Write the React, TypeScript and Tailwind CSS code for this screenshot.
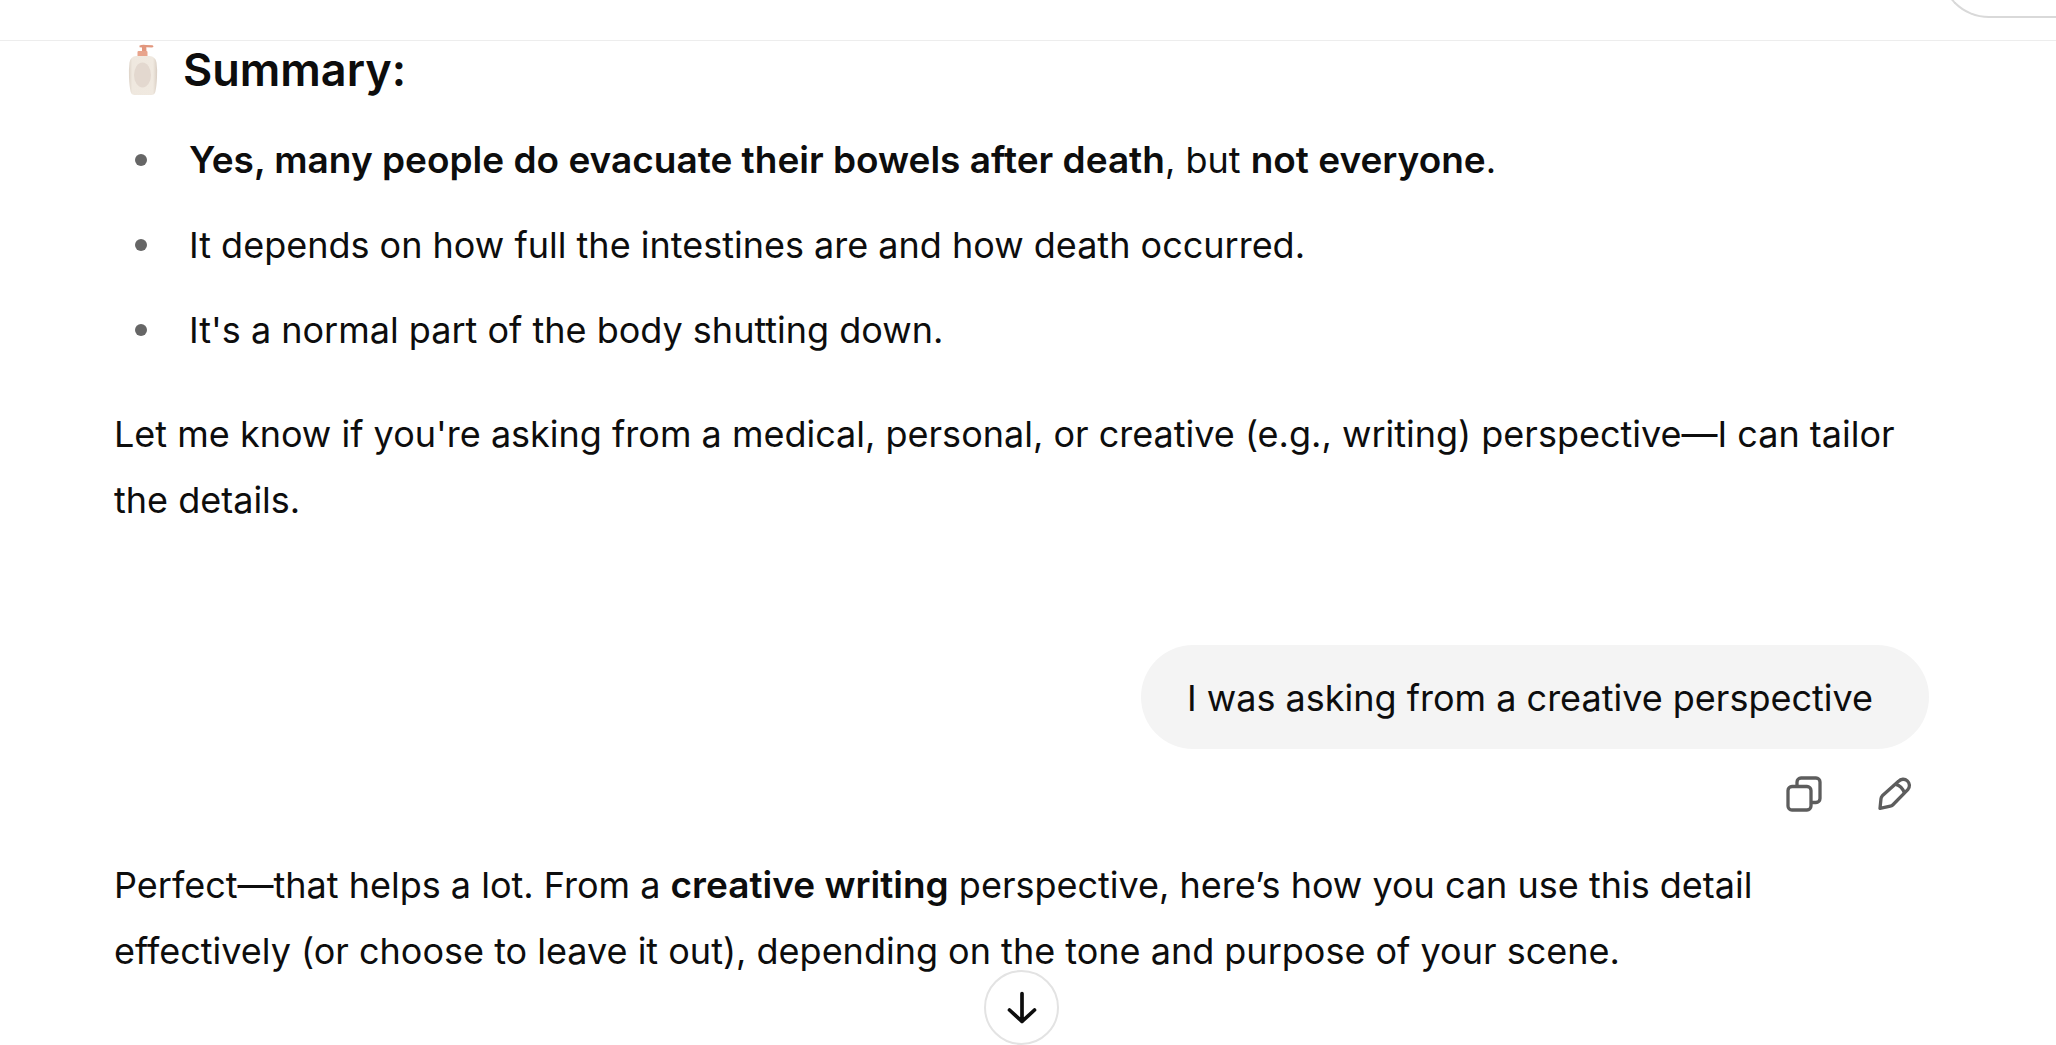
import React from "react";

function CopyIcon() {
  return (
    <svg viewBox="0 0 36 36" className="size-9" fill="none" stroke="currentColor" strokeWidth="3.300" strokeLinejoin="round" strokeLinecap="butt" aria-hidden="true">
      <rect x="2" y="10.500" width="23" height="23.500" rx="4" />
      <path d="M11 10.500V6a4 4 0 0 1 4-4h15a4 4 0 0 1 4 4v16.500a4 4 0 0 1-4 4h-5" />
    </svg>
  );
}

function PencilIcon() {
  return (
    <svg viewBox="0 0 36 36" className="size-9" fill="none" stroke="currentColor" strokeWidth="3.300" strokeLinejoin="round" aria-hidden="true">
      <path d="M22.500 5.300a6 6 0 0 1 9.300 8.400L16.700 29q-1 1-2.400 1.200L4 32.300l1-9.600q.2-1.700 1.300-2.900z" />
      <path d="M19.800 8.300q6 1.500 8.700 8.700" />
    </svg>
  );
}

function ArrowDownIcon() {
  return (
    <svg viewBox="0 0 32 34" className="h-[34px] w-8" fill="none" stroke="currentColor" strokeWidth="3.700" strokeLinecap="round" strokeLinejoin="round" aria-hidden="true">
      <path d="M16 2.500v28M3.500 19 16 30.500 28.500 19" />
    </svg>
  );
}

function Bottle() {
  return (
    <svg viewBox="0 0 32 52" className="h-[52px] w-8 shrink-0" aria-hidden="true">
      <defs>
        <linearGradient id="lotion" x1="0" x2="1">
          <stop offset="0" stopColor="#ddd3c8" />
          <stop offset=".12" stopColor="#efe8df" />
          <stop offset=".85" stopColor="#f0e9e0" />
          <stop offset="1" stopColor="#d9cec3" />
        </linearGradient>
      </defs>
      <path d="M12.500 1.400Q16 .2 19 1l6.500.3q1.300.5.8 1.600l-1.300.5-5.700-.1.2 4.700h-4.500L15 3.600l-2.500-.3z" fill="#e2977e" />
      <path d="M11.500 7h8q1 0 1 1v4.500h-10V8q0-1 1-1z" fill="#e8a48c" />
      <path d="M9 12h13.500q6 .5 7 6.500 1 7 .5 15-.4 9-1.700 14.500-.8 3-3.800 3h-17q-3 0-3.800-3Q2.400 42.500 2 33.500q-.4-8 .5-15 1-6 6.500-6.500z" fill="url(#lotion)" />
      <ellipse cx="15.500" cy="31" rx="8.500" ry="12.500" fill="#e3d8cf" />
    </svg>
  );
}

const Bold = ({ children }: { children: React.ReactNode }) => (
  <strong className="text-[37px] font-semibold">{children}</strong>
);

const Item = ({ children }: { children: React.ReactNode }) => (
  <li className="flex items-center">
    <span className="mr-[42px] ml-[21px] size-3 shrink-0 rounded-full bg-[#666]" />
    <span>{children}</span>
  </li>
);

export default function App() {
  return (
    <div className="relative min-h-screen bg-white font-[Inter,sans-serif] text-[36px] leading-[66px] text-[#0d0d0d]">
      <header className="relative h-[41px] overflow-hidden border-b border-[#ededed]">
        <div className="absolute right-0 bottom-[22px] h-[98px] w-[116px] rounded-l-full border-2 border-r-0 border-[#d9d9d9]" />
      </header>
      <main className="pr-[127px] pl-[114px]">
        <h2 className="flex h-[58px] items-center pl-[13px] text-[45px] font-semibold">
          <Bottle />
          <span className="ml-6">Summary:</span>
        </h2>
        <ul className="mt-7 flex flex-col gap-[19px]">
          <Item>
            <Bold>Yes, many people do evacuate their bowels after death</Bold>, but <Bold>not everyone</Bold>.
          </Item>
          <Item>It depends on how full the intestines are and how death occurred.</Item>
          <Item>It's a normal part of the body shutting down.</Item>
        </ul>
        <p className="mt-[38px]">
          Let me know if you're asking from a medical, personal, or creative (e.g., writing) perspective—I can tailor the details.
        </p>
        <div className="mt-[112px] flex flex-col items-end">
          <p className="rounded-[52px] bg-[#f4f4f4] pt-5 pr-[56px] pb-[18px] pl-[46px]">I was asking from a creative perspective</p>
          <div className="flex h-[103px] gap-[54px] pt-[27px] pr-[17px] text-[#5d5d5d]">
            <button type="button" aria-label="Copy" className="size-9"><CopyIcon /></button>
            <button type="button" aria-label="Edit message" className="size-9"><PencilIcon /></button>
          </div>
        </div>
        <p>
          Perfect—that helps a lot. From a <Bold>creative writing</Bold> perspective, here’s how you can use this detail effectively (or choose to leave it out), depending on the tone and purpose of your scene.
        </p>
      </main>
      <div className="pointer-events-none absolute inset-x-0 bottom-0 flex justify-center pr-[13px]">
        <button type="button" aria-label="Scroll to bottom" className="pointer-events-auto flex size-[75px] items-center justify-center rounded-full border-2 border-[#e3e3e3] bg-white">
          <ArrowDownIcon />
        </button>
      </div>
    </div>
  );
}
